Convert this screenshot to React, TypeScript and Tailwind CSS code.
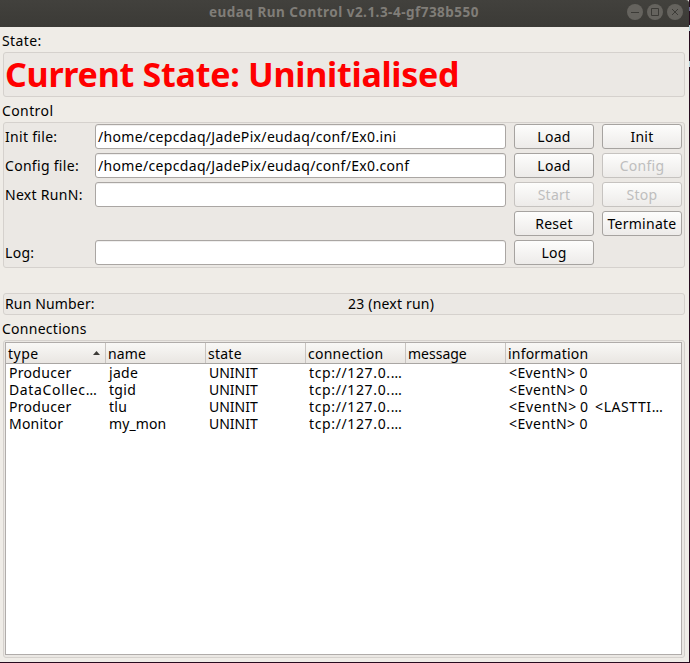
import type { ReactNode } from "react";

const columns = [
  { name: "type", spacing: "tracking-[0.5px]" },
  { name: "name", spacing: "tracking-[0.1px]" },
  { name: "state", spacing: "tracking-[0.25px]" },
  { name: "connection", spacing: "tracking-[0.25px]" },
  { name: "message", spacing: "tracking-[0px]" },
  { name: "information", spacing: "tracking-[0.2px]" },
];

const rows = [
  ["Producer", "jade", "UNINIT", "tcp://127.0.…", "", "<EventN> 0"],
  ["DataCollec…", "tgid", "UNINIT", "tcp://127.0.…", "", "<EventN> 0"],
  ["Producer", "tlu", "UNINIT", "tcp://127.0.…", "", "<EventN> 0  <LASTTI…"],
  ["Monitor", "my_mon", "UNINIT", "tcp://127.0.…", "", "<EventN> 0"],
];

const cellSpacing: Record<string, string> = {
  "DataCollec…": "tracking-[0.65px]",
  "tcp://127.0.…": "tracking-[0.63px]",
  "<EventN> 0": "tracking-[0.4px]",
  "<EventN> 0  <LASTTI…": "tracking-[0.58px] [word-spacing:-1px]",
  UNINIT: "tracking-[0px]",
  my_mon: "tracking-[0.1px]",
  Monitor: "tracking-[0.2px]",
};

function Button({ children, disabled }: { children: ReactNode; disabled?: boolean }) {
  return (
    <button
      disabled={disabled}
      className={`h-[25px] w-20 rounded-[3px] border bg-gradient-to-b from-[#fdfdfc] to-[#edebe9] text-center leading-[23px] tracking-[0.25px] ${
        disabled ? "border-[#c6c3c0] text-[#bebebe]" : "border-[#a6a3a0] text-black"
      }`}
    >
      {children}
    </button>
  );
}

function Field({ value }: { value: string }) {
  return (
    <div className="mr-2 h-[25px] w-[411px] rounded-[3px] border border-[#aaa6a3] bg-white pl-[2px] leading-[23px] tracking-[0.33px] shadow-[inset_0_1px_0_#f0efee]">
      {value}
    </div>
  );
}

function Panel({ className, children }: { className: string; children?: ReactNode }) {
  return (
    <div className={`ml-[3px] w-[682px] rounded-[3px] border border-[#d5d1cd] bg-[#ebe8e4] ${className}`}>
      {children}
    </div>
  );
}

function Label({ children }: { children: string }) {
  return <div className="h-[25px] w-[90px] leading-[25px] tracking-[0.3px]">{children}</div>;
}

export default function App() {
  return (
    <div className="flex h-[663px] w-[690px] overflow-hidden bg-[#270a1e] font-['Noto_Sans','Open_Sans',sans-serif] text-[14px] whitespace-pre text-black">
      <div className="flex h-[662px] w-[689px] flex-col bg-[#efece7]">
        <header className="flex h-[27px] shrink-0 items-center rounded-tr-[3px] bg-gradient-to-b from-[#42413d] to-[#3b3a36]">
          <div className="w-[627px] pb-[3px] pl-[209px] text-[13.5px] leading-6 font-bold tracking-[0.49px] text-[#807d78]">
            eudaq Run Control v2.1.3-4-gf738b550
          </div>
          <svg className="-mt-[3px] h-4 w-14" viewBox="0 0 56 16" fill="none" stroke="#3c3b37" strokeWidth="1">
            <g fill="#65635e" stroke="none">
              <circle cx="8" cy="8" r="8" />
              <circle cx="28" cy="8" r="8" />
              <circle cx="48" cy="8" r="8" />
            </g>
            <path d="M4 8.5h8M24.5 4.5h7v7h-7zM45 5l6 6M51 5l-6 6" />
          </svg>
        </header>

        <div className="h-[25px] shrink-0 pt-[2px] pl-[2px] leading-6 tracking-[0.4px]">State:</div>
        <Panel className="h-[45px] shrink-0 pl-px text-[34px] leading-[43px] font-bold tracking-[-0.26px] text-[#ff0000]">
          Current State: Uninitialised
        </Panel>

        <div className="h-[25px] shrink-0 pt-[2px] pl-[2px] leading-6 tracking-[0.4px]">Control</div>
        <Panel className="flex h-[146px] shrink-0 flex-col gap-1 pt-px pl-px">
          <div className="flex">
            <Label>Init file:</Label>
            <Field value="/home/cepcdaq/JadePix/eudaq/conf/Ex0.ini" />
            <div className="flex gap-2">
              <Button>Load</Button>
              <Button>Init</Button>
            </div>
          </div>
          <div className="flex">
            <Label>Config file:</Label>
            <Field value="/home/cepcdaq/JadePix/eudaq/conf/Ex0.conf" />
            <div className="flex gap-2">
              <Button>Load</Button>
              <Button disabled>Config</Button>
            </div>
          </div>
          <div className="flex">
            <Label>Next RunN:</Label>
            <Field value="" />
            <div className="flex gap-2">
              <Button disabled>Start</Button>
              <Button disabled>Stop</Button>
            </div>
          </div>
          <div className="flex gap-2 pl-[509px]">
            <Button>Reset</Button>
            <Button>Terminate</Button>
          </div>
          <div className="flex">
            <Label>Log:</Label>
            <Field value="" />
            <Button>Log</Button>
          </div>
        </Panel>

        <Panel className="mt-[25px] flex h-[22px] shrink-0 pl-px leading-5">
          <span className="w-[343px] tracking-[0.15px]">Run Number:</span>
          <span className="tracking-[0.2px]">23 (next run)</span>
        </Panel>

        <div className="h-[25px] shrink-0 pt-[2px] pl-[2px] leading-6 tracking-[0.27px]">Connections</div>
        <Panel className="h-[318px] shrink-0 pt-px pl-px">
          <div className="h-[313px] w-[677px] border border-[#b0acaa] bg-white">
            <div className="flex h-[21px] border-b border-[#a9a6a3] bg-gradient-to-b from-[#f9f8f6] to-[#e9e6e2]">
              {columns.map(({ name, spacing }, i) => (
                <div
                  key={name}
                  className={`flex h-5 shrink-0 pl-[2px] leading-[22px] ${spacing} ${
                    i < 5 ? "w-[100px] border-r border-[#c8c4c0]" : "w-[175px]"
                  }`}
                >
                  {name}
                  {i === 0 && (
                    <svg className="mt-2 mr-[5px] ml-auto h-1 w-[7px]" viewBox="0 0 7 4">
                      <path d="M3.5 0L7 4H0z" fill="#3c3b37" />
                    </svg>
                  )}
                </div>
              ))}
            </div>
            {rows.map((row, r) => (
              <div key={r} className="flex h-[17px] leading-[17px]">
                {row.map((cell, c) => (
                  <div
                    key={c}
                    className={`shrink-0 pl-[3px] ${c < 5 ? "w-[100px]" : "w-[175px]"} ${
                      cellSpacing[cell] ?? "tracking-[0.3px]"
                    }`}
                  >
                    {cell}
                  </div>
                ))}
              </div>
            ))}
          </div>
        </Panel>
      </div>
      <div className="flex w-px flex-col pt-[7px]">
        <div className="h-1 bg-[#6e6796]" />
        <div className="mt-[14px] h-[6px] bg-[#b9d3dc]" />
        <div className="mt-[30px] h-[6px] bg-[#b9d3dc]" />
      </div>
    </div>
  );
}
